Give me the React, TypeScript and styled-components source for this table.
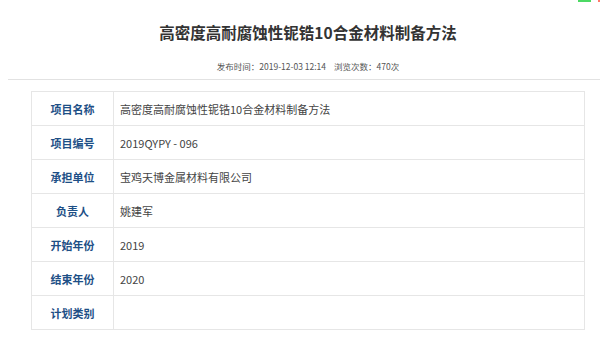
import styled, { createGlobalStyle } from 'styled-components';

const GlobalStyle = createGlobalStyle`
  html, body {
    margin: 0;
    padding: 0;
    background: #ffffff;
    overflow: hidden;
  }
  body {
    font-family: "Noto Sans CJK SC", "Noto Sans", sans-serif;
  }
`;

interface IInfoRow {
  label: string;
  value: string;
}

const rows: IInfoRow[] = [
  { label: '项目名称', value: '高密度高耐腐蚀性铌锆10合金材料制备方法' },
  { label: '项目编号', value: '2019QYPY - 096' },
  { label: '承担单位', value: '宝鸡天博金属材料有限公司' },
  { label: '负责人', value: '姚建军' },
  { label: '开始年份', value: '2019' },
  { label: '结束年份', value: '2020' },
  { label: '计划类别', value: '' },
];

export default function App() {
  return (
    <>
      <GlobalStyle />
      <Page>
        <Article>
          <Title>高密度高耐腐蚀性铌锆10合金材料制备方法</Title>
          <Meta>
            <span>发布时间：2019-12-03 12:14</span>
            <span>浏览次数：470次</span>
          </Meta>
          <Divider />
          <InfoTable>
            {rows.map(row => (
              <Row key={row.label}>
                <Label>{row.label}</Label>
                <Value>{row.value}</Value>
              </Row>
            ))}
          </InfoTable>
        </Article>
        <CornerBadge>
          <GreenMark />
          <RedMark />
        </CornerBadge>
      </Page>
    </>
  );
}

const Page = styled.div`
  position: relative;
  width: 600px;
  height: 338px;
  padding-left: 8px;
  box-sizing: border-box;
  display: flex;
  overflow: hidden;
`;

const Article = styled.div`
  width: 600px;
  flex-shrink: 0;
  display: flex;
  flex-direction: column;
  padding-top: 20px;
`;

const Title = styled.h1`
  margin: 0;
  font-size: 15.5px;
  line-height: 24px;
  font-weight: bold;
  color: #333333;
  text-align: center;
`;

const Meta = styled.div`
  margin-top: 15px;
  display: flex;
  justify-content: center;
  gap: 8px;
  font-size: 8.5px;
  line-height: 14px;
  color: #555555;
`;

const Divider = styled.div`
  margin-top: 6px;
  height: 1px;
  background: #e2e2e2;
`;

const InfoTable = styled.div`
  margin: 11px 23px 0;
  border: 1px solid #e6e6e6;
  border-bottom: none;
  display: flex;
  flex-direction: column;
`;

const Row = styled.div`
  display: grid;
  grid-template-columns: 82px 1fr;
  height: 34px;
  box-sizing: border-box;
  border-bottom: 1px solid #e6e6e6;
`;

const Label = styled.div`
  display: flex;
  align-items: center;
  justify-content: center;
  border-right: 1px solid #e6e6e6;
  font-size: 11px;
  font-weight: bold;
  color: #1d4f86;
`;

const Value = styled.div`
  display: flex;
  align-items: center;
  padding-left: 6px;
  font-size: 11px;
  color: #444444;
`;

const CornerBadge = styled.div`
  position: absolute;
  top: 0;
  right: 0;
  display: flex;
  gap: 7px;
`;

const GreenMark = styled.div`
  width: 13px;
  height: 2px;
  background: #4cd964;
`;

const RedMark = styled.div`
  width: 2px;
  height: 2px;
  background: #ff7a6a;
`;
